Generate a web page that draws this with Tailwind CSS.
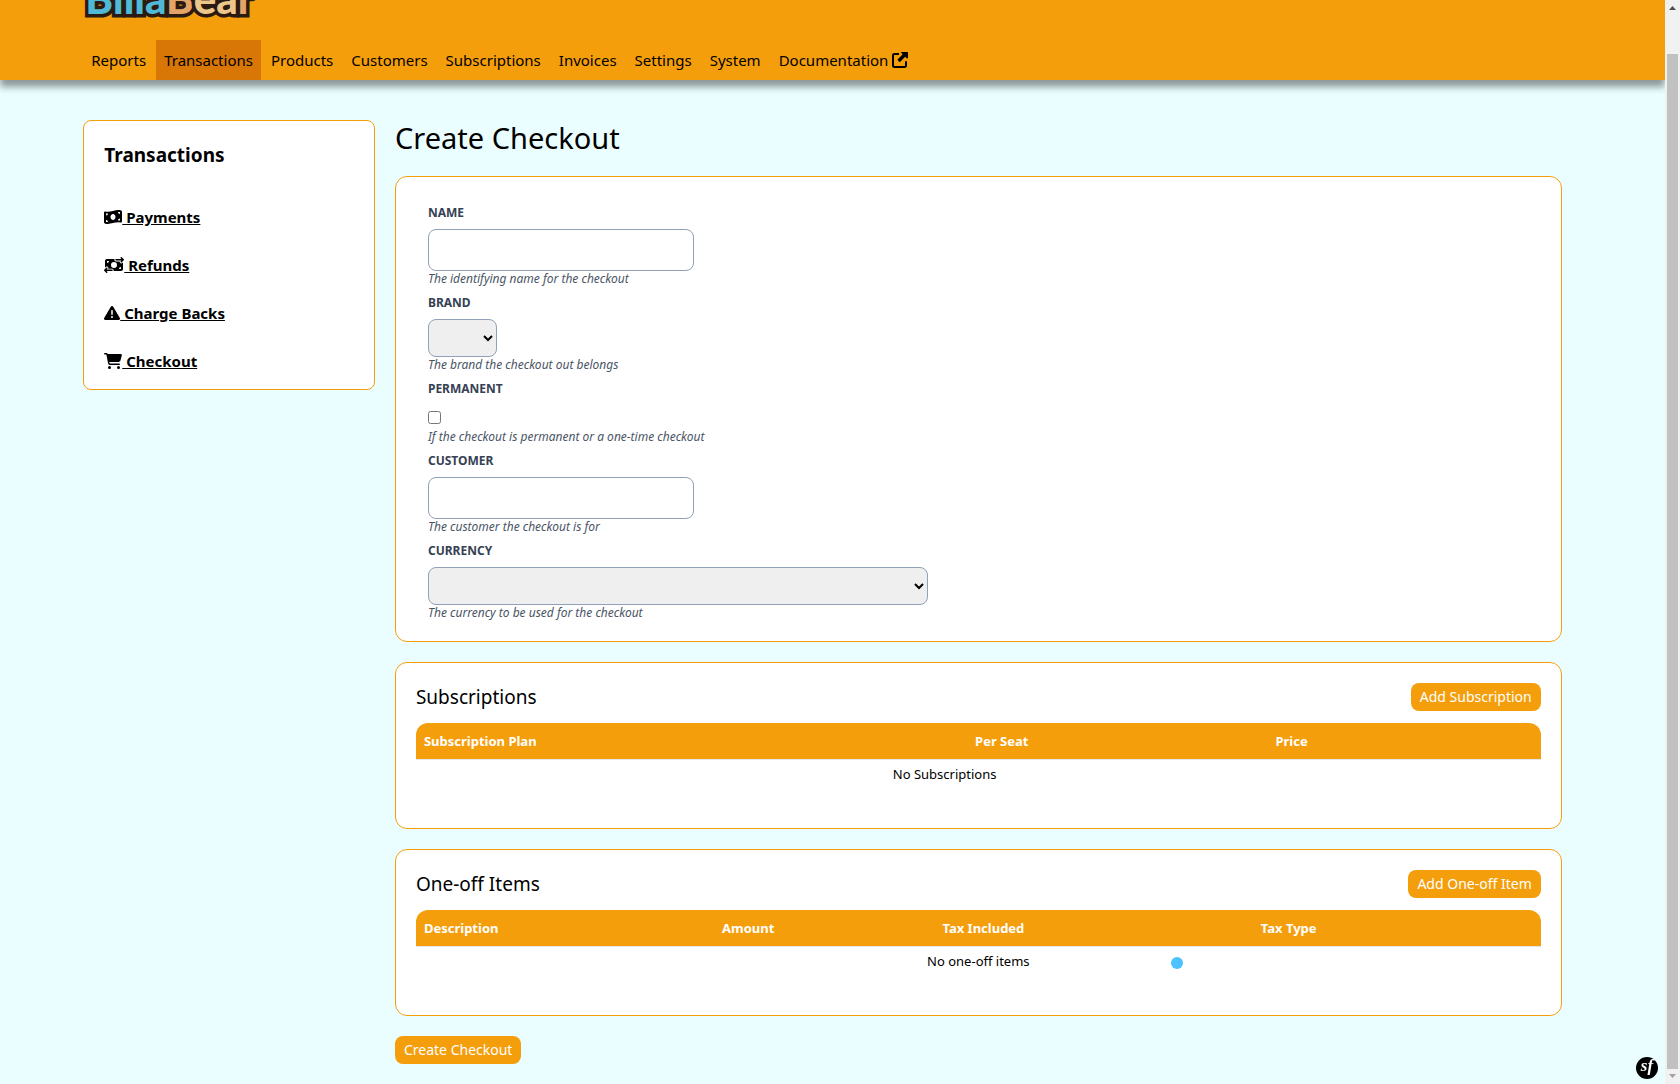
<!DOCTYPE html>
<html lang="en">
<head>
  <meta charset="UTF-8">
  <meta name="viewport" content="width=device-width, initial-scale=1.0">
  <title>BillaBear - Create Checkout</title>
  <script src="https://cdn.jsdelivr.net/npm/@tailwindcss/browser@4"></script>
</head>
<body class="min-h-screen bg-[#ebfeff] pr-[15px] font-['Noto_Sans',sans-serif] text-[15px] leading-6 text-black">

  <header class="bg-[#f59e0b] px-[5%] shadow-[0_7px_7px_rgba(0,0,0,0.4)]">
    <div class="flex h-10 items-start overflow-hidden px-0.5">
      <a href="#" class="-mt-[22px] font-[Lato] text-[42px] leading-10 font-black [-webkit-text-stroke:7px_#2a1a12] [paint-order:stroke_fill]"><span class="text-[#4fb9d6]">Billa</span><span class="text-[#e3a46a]">B</span><span class="text-[#ecc68a]">ea</span><span class="text-[#e3a46a]">r</span></a>
    </div>
    <nav class="flex gap-0.5">
      <a href="#" class="p-2">Reports</a>
      <a href="#" class="bg-[#d97706] p-2">Transactions</a>
      <a href="#" class="p-2">Products</a>
      <a href="#" class="p-2">Customers</a>
      <a href="#" class="p-2">Subscriptions</a>
      <a href="#" class="p-2">Invoices</a>
      <a href="#" class="p-2">Settings</a>
      <a href="#" class="p-2">System</a>
      <a href="#" class="flex items-center gap-1 p-2">Documentation
        <svg class="size-4" viewBox="0 0 512 512" fill="currentColor"><path d="M304 0c-13 0-20 16-11 25l50 50L186 232c-9 9-9 24 0 33l45 45c9 9 24 9 33 0L421 153l50 50c9 9 41 2 41-11V24c0-13-11-24-24-24H304zM72 32C32 32 0 64 0 104V440c0 40 32 72 72 72H408c40 0 72-32 72-72V312c0-16-13-28-32-28s-32 12-32 28V432c0 9-7 16-16 16H80c-9 0-16-7-16-16V112c0-9 7-16 16-16H200c17 0 30-14 30-32s-13-32-30-32H72z"/></svg>
      </a>
    </nav>
  </header>

  <div class="mx-[5%] grid grid-cols-[minmax(0,1fr)_minmax(0,4fr)] items-start gap-5 pt-10 pr-5 pb-5">
    <aside class="rounded-lg border border-[#f59e0b] bg-white px-5 pt-5 pb-4">
      <h2 class="mb-9 text-[19px] leading-7 font-bold">Transactions</h2>
      <ul class="space-y-6 font-bold">
        <li><a href="#" class="flex items-center"><svg class="h-4 w-[18px]" viewBox="0 0 576 512" fill="currentColor"><path d="M0 112.5V422.3c0 18 10.1 35 27 41.3c87 32.5 174 10.3 261-11.9c79.8-20.3 159.6-40.7 239.3-18.9c23 6.3 48.7-9.5 48.7-33.4V89.7c0-18-10.1-35-27-41.3C462 15.9 375 38.1 288 60.3C208.2 80.6 128.4 100.9 48.7 79.1C25.6 72.8 0 88.6 0 112.5zM288 352c-44.2 0-80-43-80-96s35.8-96 80-96s80 43 80 96s-35.8 96-80 96zM64 352c35.3 0 64 28.7 64 64H64V352zm64-208c0 35.3-28.7 64-64 64V144h64zM512 304v64H448c0-35.3 28.7-64 64-64zM448 96h64v64c-35.3 0-64-28.7-64-64z"/></svg><span class="underline">&nbsp;Payments</span></a></li>
        <li><a href="#" class="flex items-center"><svg class="h-4 w-5" viewBox="0 0 640 512" fill="currentColor"><path d="M535 41c-9.4-9.4-9.4-24.6 0-33.9s24.6-9.4 33.9 0l64 64c4.5 4.5 7 10.6 7 17s-2.5 12.5-7 17l-64 64c-9.4 9.4-24.6 9.4-33.9 0s-9.4-24.6 0-33.9l23-23L384 112c-13.3 0-24-10.7-24-24s10.7-24 24-24l174.1 0L535 41zM105 377l-23 23L256 400c13.3 0 24 10.7 24 24s-10.7 24-24 24L81.9 448l23 23c9.4 9.4 9.4 24.6 0 33.9s-24.6 9.4-33.9 0L7 441c-4.5-4.5-7-10.6-7-17s2.5-12.5 7-17l64-64c9.4-9.4 24.6-9.4 33.9 0s9.4 24.6 0 33.9zM96 64H337.9c-3.7 7.2-5.9 15.3-5.9 24c0 28.7 23.3 52 52 52l117.4 0c-4 17 .6 35.5 13.8 48.8c20.3 20.3 53.2 20.3 73.5 0L608 169.5V384c0 35.3-28.7 64-64 64H302.1c3.7-7.2 5.9-15.3 5.9-24c0-28.7-23.3-52-52-52l-117.4 0c4-17-.6-35.5-13.8-48.8c-20.3-20.3-53.2-20.3-73.5 0L32 342.5V128c0-35.3 28.7-64 64-64zm64 64H96v64c35.3 0 64-28.7 64-64zM544 320c-35.3 0-64 28.7-64 64h64V320zM320 352a96 96 0 1 0 0-192 96 96 0 1 0 0 192z"/></svg><span class="underline">&nbsp;Refunds</span></a></li>
        <li><a href="#" class="flex items-center"><svg class="size-4" viewBox="0 0 512 512" fill="currentColor"><path d="M256 32c14.2 0 27.3 7.5 34.5 19.8l216 368c7.3 12.4 7.3 27.7 .2 40.1S486.3 480 472 480H40c-14.3 0-27.6-7.7-34.7-20.1s-7-27.8 .2-40.1l216-368C228.7 39.5 241.8 32 256 32zm0 128c-13.3 0-24 10.7-24 24V296c0 13.3 10.7 24 24 24s24-10.7 24-24V184c0-13.3-10.7-24-24-24zm32 224a32 32 0 1 0 -64 0 32 32 0 1 0 64 0z"/></svg><span class="underline">&nbsp;Charge Backs</span></a></li>
        <li><a href="#" class="flex items-center"><svg class="h-4 w-[18px]" viewBox="0 0 576 512" fill="currentColor"><path d="M0 24C0 10.7 10.7 0 24 0H69.5c22 0 41.5 12.8 50.6 32h411c26.3 0 45.5 25 38.6 50.4l-41 152.3c-8.5 31.4-37 53.3-69.5 53.3H170.7l5.4 28.5c2.2 11.3 12.1 19.5 23.6 19.5H488c13.3 0 24 10.7 24 24s-10.7 24-24 24H199.7c-34.6 0-64.3-24.6-70.7-58.5L77.4 54.5c-.7-3.8-4-6.5-7.9-6.5H24C10.7 48 0 37.3 0 24zM128 464a48 48 0 1 1 96 0 48 48 0 1 1 -96 0zm336-48a48 48 0 1 1 0 96 48 48 0 1 1 0-96z"/></svg><span class="underline">&nbsp;Checkout</span></a></li>
      </ul>
    </aside>

    <main>
      <h1 class="mb-5 text-[29px] leading-9">Create Checkout</h1>

      <form class="space-y-5">
        <div class="rounded-xl border border-[#f59e0b] bg-white px-8 py-5">
          <div class="pt-2">
            <label for="name" class="mb-2 block text-xs font-bold text-gray-700 uppercase">Name</label>
            <input id="name" type="text" class="block h-[42px] w-[266px] rounded-lg border border-slate-400 bg-white px-3">
            <p class="text-[12px] leading-4 text-gray-600 italic">The identifying name for the checkout</p>
          </div>
          <div class="pt-2">
            <label for="brand" class="mb-2 block text-xs font-bold text-gray-700 uppercase">Brand</label>
            <select id="brand" class="block h-[38px] w-[69px] rounded-lg border border-slate-400 bg-[#efefef]"></select>
            <p class="text-[12px] leading-4 text-gray-600 italic">The brand the checkout out belongs</p>
          </div>
          <div class="pt-2">
            <label for="permanent" class="mb-2 block text-xs font-bold text-gray-700 uppercase">Permanent</label>
            <div class="flex h-6 items-center"><input id="permanent" type="checkbox" class="size-[13px]"></div>
            <p class="text-[12px] leading-4 text-gray-600 italic">If the checkout is permanent or a one-time checkout</p>
          </div>
          <div class="pt-2">
            <label for="customer" class="mb-2 block text-xs font-bold text-gray-700 uppercase">Customer</label>
            <input id="customer" type="text" class="block h-[42px] w-[266px] rounded-lg border border-slate-400 bg-white px-3">
            <p class="text-[12px] leading-4 text-gray-600 italic">The customer the checkout is for</p>
          </div>
          <div class="pt-2">
            <label for="currency" class="mb-2 block text-xs font-bold text-gray-700 uppercase">Currency</label>
            <select id="currency" class="block h-[38px] w-[500px] rounded-lg border border-slate-400 bg-[#efefef]"></select>
            <p class="text-[12px] leading-4 text-gray-600 italic">The currency to be used for the checkout</p>
          </div>
        </div>

        <section class="rounded-xl border border-[#f59e0b] bg-white p-5">
          <div class="mb-3 flex items-center justify-between">
            <h2 class="text-[19px] leading-7">Subscriptions</h2>
            <button type="button" class="h-7 rounded-lg bg-[#f59e0b] px-[9px] text-sm text-white">Add Subscription</button>
          </div>
          <table class="mb-5 w-full table-fixed text-[13px] leading-5">
            <thead>
              <tr class="text-left text-white">
                <th class="w-[49%] rounded-tl-xl border-b border-gray-200 bg-[#f59e0b] bg-clip-padding p-2">Subscription Plan</th>
                <th class="w-[26.7%] border-b border-gray-200 bg-[#f59e0b] bg-clip-padding p-2">Per Seat</th>
                <th class="w-[18.3%] border-b border-gray-200 bg-[#f59e0b] bg-clip-padding p-2">Price</th>
                <th class="rounded-tr-xl border-b border-gray-200 bg-[#f59e0b] bg-clip-padding p-2"></th>
              </tr>
            </thead>
            <tbody>
              <tr><td colspan="3" class="py-1 text-center">No Subscriptions</td></tr>
            </tbody>
          </table>
        </section>

        <section class="rounded-xl border border-[#f59e0b] bg-white p-5">
          <div class="mb-3 flex items-center justify-between">
            <h2 class="text-[19px] leading-7">One-off Items</h2>
            <button type="button" class="h-7 rounded-lg bg-[#f59e0b] px-[9px] text-sm text-white">Add One-off Item</button>
          </div>
          <table class="mb-5 w-full table-fixed text-[13px] leading-5">
            <thead>
              <tr class="text-left text-white">
                <th class="w-[26.5%] rounded-tl-xl border-b border-gray-200 bg-[#f59e0b] bg-clip-padding p-2">Description</th>
                <th class="w-[19.6%] border-b border-gray-200 bg-[#f59e0b] bg-clip-padding p-2">Amount</th>
                <th class="w-[28.3%] border-b border-gray-200 bg-[#f59e0b] bg-clip-padding p-2">Tax Included</th>
                <th class="rounded-tr-xl border-b border-gray-200 bg-[#f59e0b] bg-clip-padding p-2">Tax Type</th>
              </tr>
            </thead>
            <tbody>
              <tr><td colspan="4" class="py-1 text-center">No one-off items</td></tr>
            </tbody>
          </table>
        </section>

        <button type="submit" class="block h-7 rounded-lg bg-[#f59e0b] px-[9px] text-sm text-white">Create Checkout</button>
      </form>
    </main>
  </div>

  <!-- click marker -->
  <div class="absolute top-[957px] left-[1171px] size-3 rounded-full bg-[#4cc2ff]"></div>

  <!-- debug toolbar toggle -->
  <button type="button" aria-label="Symfony toolbar" class="fixed right-[22px] bottom-[5px] flex size-[22px] items-center justify-center rounded-full bg-black font-['Liberation_Serif',serif] text-[17px] leading-4 font-bold text-white italic"><span class="pb-1">sf</span></button>

  <!-- scrollbar -->
  <div class="fixed inset-y-0 right-0 flex w-[15px] flex-col items-center bg-[#f1f1f1]">
    <svg class="h-[54px] w-[15px] shrink-0" viewBox="0 0 15 54" fill="#505050"><path d="M4 10h7L7.500 6z"/></svg>
    <div class="w-[11px] flex-1 bg-[#c1c1c1]"></div>
    <svg class="size-[15px] shrink-0" viewBox="0 0 15 15" fill="#a3a3a3"><path d="M4 5h7L7.500 9z"/></svg>
  </div>

</body>
</html>
